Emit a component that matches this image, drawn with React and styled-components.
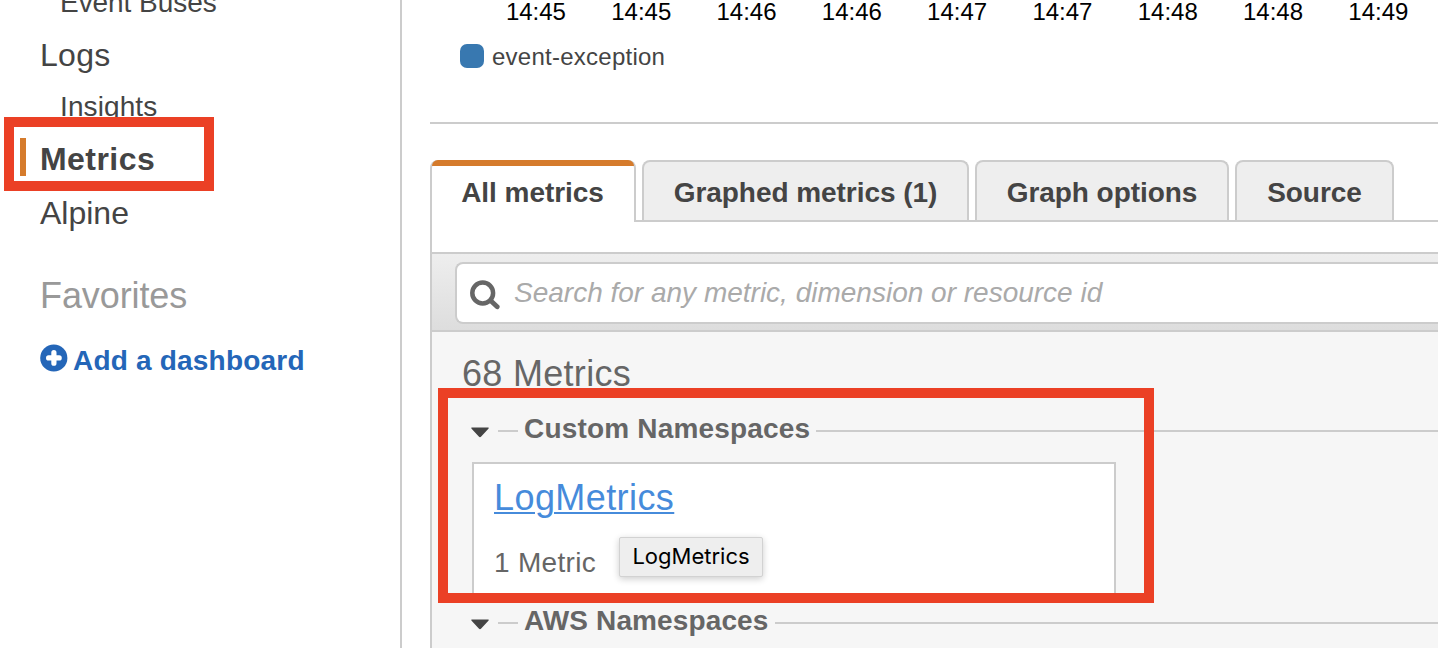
import React from "react";
import styled, { createGlobalStyle } from "styled-components";

const LINE = "#ccc";
const RED = "#eb4025";

const GlobalStyle = createGlobalStyle`
  body { margin: 0; background: #fff; }
  * { box-sizing: border-box; }
`;

const Page = styled.div`
  position: relative;
  display: flex;
  width: 1438px;
  height: 648px;
  overflow: hidden;
  background: #fff;
  color: #444;
  font-family: "Liberation Sans", Arial, Helvetica, sans-serif;
  white-space: nowrap;
`;

const Sidebar = styled.nav`
  flex: none;
  display: flex;
  flex-direction: column;
  width: 402px;
  border-right: 2px solid ${LINE};
`;

const NavItem = styled.a`
  padding-left: 40px;
  margin-top: ${(p) => p.$gap}px;
  font-size: 32px;
  line-height: 36px;
  letter-spacing: ${(p) => p.$track || 0}px;
`;

const SubItem = styled(NavItem)`
  padding-left: 60px;
  font-size: 28px;
  line-height: 38px;
`;

const CurrentItem = styled(NavItem)`
  margin-left: 20px;
  padding-left: 14px;
  height: 38px;
  border-left: 6px solid #d57b2c;
  font-weight: bold;
  line-height: 42px;
`;

const NavHeading = styled.h2`
  margin: 45px 0 0 40px;
  font-size: 36px;
  font-weight: normal;
  line-height: 40px;
  letter-spacing: -0.1px;
  color: #999;
`;

const AddLink = styled.a`
  display: flex;
  gap: 5px;
  margin: 26px 0 0 40px;
  font-size: 28px;
  font-weight: bold;
  line-height: 38px;
  letter-spacing: 0.2px;
  color: #2466b8;

  svg { margin-top: 2px; }
`;

const Main = styled.main`
  flex: 1;
  min-width: 0;
  display: flex;
  flex-direction: column;
  padding-left: 28px;
`;

const TimeAxis = styled.div`
  display: flex;
  padding-left: 53.3px;
`;

const Tick = styled.span`
  flex: none;
  width: 105.3px;
  text-align: center;
  font-size: 24px;
  line-height: 24px;
  color: #000;
`;

const Legend = styled.div`
  display: flex;
  gap: 8px;
  margin: 20px 0 0 30px;
  height: 24px;
  font-size: 24px;
  line-height: 26px;
  letter-spacing: 0.25px;
`;

const Swatch = styled.span`
  width: 24px;
  height: 24px;
  border-radius: 7px;
  background: #3878b0;
`;

const Rule = styled.div`
  flex: none;
  height: 2px;
  margin: 54px 0 36px;
  background: ${LINE};
`;

const Tabs = styled.div`
  flex: none;
  display: flex;
  gap: 6px;
  height: 62px;
  box-shadow: inset 0 -2px ${LINE};
`;

const Tab = styled.button`
  position: relative;
  flex: none;
  width: ${(p) => p.$width}px;
  height: 60px;
  padding: 2px 0 0;
  border: 2px solid ${LINE};
  border-bottom: 0;
  border-radius: 8px 8px 0 0;
  background: #eee;
  color: #444;
  font: bold 28px/58px "Liberation Sans", Arial, sans-serif;
  letter-spacing: -0.05px;
`;

const ActiveTab = styled(Tab)`
  height: 62px;
  padding: 1px 1px 0 0;
  line-height: 59px;
  background: #fff;

  &::before {
    content: "";
    position: absolute;
    top: -2px;
    left: 0;
    right: 0;
    height: 6px;
    border-radius: 6px 6px 0 0;
    background: #d57b2c;
  }
`;

const Panel = styled.section`
  flex: 1;
  display: flex;
  flex-direction: column;
  border-left: 2px solid ${LINE};
  padding-top: 30px;
`;

const SearchBar = styled.div`
  flex: none;
  height: 80px;
  padding: 8px 0 0 23px;
  border: solid ${LINE};
  border-width: 2px 0;
  background: linear-gradient(#eee, #ddd);
`;

const SearchField = styled.div`
  display: flex;
  gap: 12px;
  height: 62px;
  padding: 14px 0 0 13px;
  border: 2px solid ${LINE};
  border-right: 0;
  border-radius: 8px 0 0 8px;
  background: #fff;
`;

const Placeholder = styled.span`
  font-size: 28px;
  font-style: italic;
  line-height: 30px;
  color: #aaa;
`;

const Results = styled.div`
  flex: 1;
  padding-top: 22px;
  background: #f6f6f6;
  color: #666;
`;

const Count = styled.h2`
  margin: 0 0 16px 30px;
  font-size: 36px;
  font-weight: normal;
  line-height: 40px;
  letter-spacing: 0.3px;
`;

const GroupHeader = styled.div`
  display: flex;
  height: 36px;
  padding-left: 38px;
  margin-top: ${(p) => p.$gap}px;
`;

const Caret = styled.svg`
  margin: 17px 8px 0 0;
`;

const GroupTitle = styled.h3`
  margin: 0 6px;
  font-size: 28px;
  line-height: 38px;
  width: ${(p) => p.$width}px;
  letter-spacing: ${(p) => p.$track}px;
`;

const GroupLine = styled.span`
  width: ${(p) => (p.$short ? "20px" : "auto")};
  flex: ${(p) => (p.$short ? "none" : 1)};
  height: 2px;
  margin-top: 20px;
  background: ${LINE};
`;

const Card = styled.article`
  width: 644px;
  height: 136px;
  margin: 16px 0 0 40px;
  padding: 14px 0 0 20px;
  border: 2px solid ${LINE};
  background: #fff;
`;

const CardLink = styled.a`
  display: block;
  font-size: 36px;
  line-height: 40px;
  letter-spacing: 0.42px;
  color: #468bdb;
  text-decoration: underline 2px;
  text-underline-offset: 2px;
`;

const CardCount = styled.p`
  margin: 27px 0 0;
  font-size: 28px;
  line-height: 36px;
  letter-spacing: 0.3px;
`;

const Tooltip = styled.div`
  position: absolute;
  left: 619px;
  top: 537px;
  width: 144px;
  height: 40px;
  border: 1px solid #d2d2d2;
  border-radius: 2px;
  background: #eee;
  box-shadow: 0 2px 7px rgba(0, 0, 0, 0.2);
  color: #000;
  font: 22px/37px Inter, sans-serif;
  text-align: center;
`;

const Highlight = styled.div`
  position: absolute;
  left: ${(p) => p.$x}px;
  top: ${(p) => p.$y}px;
  width: ${(p) => p.$w}px;
  height: ${(p) => p.$h}px;
  border: 10px solid ${RED};
`;

const ticks = ["14:45", "14:45", "14:46", "14:46", "14:47", "14:47", "14:48", "14:48", "14:49"];

const PlusIcon = () => (
  <svg width="28" height="28" viewBox="0 0 28 28">
    <circle cx="13.8" cy="14" r="13.6" fill="#2466b8" />
    <path d="M13.9 8.6v10.6M8.6 13.9h10.6" stroke="#fff" strokeWidth="5.2" strokeLinecap="round" />
  </svg>
);

const SearchIcon = () => (
  <svg width="32" height="32" viewBox="0 0 32 32">
    <circle cx="12.7" cy="15" r="10.4" fill="none" stroke="#666" strokeWidth="4.5" />
    <path d="M20.5 22.5l6.7 6.3" stroke="#666" strokeWidth="4.8" strokeLinecap="round" />
  </svg>
);

const Group = ({ title, gap, width, track }) => (
  <GroupHeader $gap={gap}>
    <Caret width="20" height="12" viewBox="0 0 20 12">
      <path d="M1.6.5h16.8q.9.3 0 1.2l-7.2 7.9q-1.2 1.2-2.4 0L1.6 1.7Q.8.8 1.6.5z" fill="#444" />
    </Caret>
    <GroupLine $short />
    <GroupTitle $width={width} $track={track}>{title}</GroupTitle>
    <GroupLine />
  </GroupHeader>
);

export default function App() {
  return (
    <Page>
      <GlobalStyle />
      <Sidebar>
        <SubItem $gap={-16} $track={-0.05}>Event Buses</SubItem>
        <NavItem $gap={15} $track={0.3}>Logs</NavItem>
        <SubItem $gap={15} $track={0.1}>Insights</SubItem>
        <CurrentItem $gap={12} $track={0.45}>Metrics</CurrentItem>
        <NavItem $gap={19}>Alpine</NavItem>
        <NavHeading>Favorites</NavHeading>
        <AddLink>
          <PlusIcon />
          <span>Add a dashboard</span>
        </AddLink>
      </Sidebar>
      <Main>
        <TimeAxis>
          {ticks.map((t, i) => <Tick key={i}>{t}</Tick>)}
        </TimeAxis>
        <Legend>
          <Swatch />
          <span>event-exception</span>
        </Legend>
        <Rule />
        <Tabs>
          <ActiveTab $width={206}>All metrics</ActiveTab>
          <Tab $width={327}>Graphed metrics (1)</Tab>
          <Tab $width={254}>Graph options</Tab>
          <Tab $width={159}>Source</Tab>
        </Tabs>
        <Panel>
          <SearchBar>
            <SearchField>
              <SearchIcon />
              <Placeholder>Search for any metric, dimension or resource id</Placeholder>
            </SearchField>
          </SearchBar>
          <Results>
            <Count>68 Metrics</Count>
            <Group title="Custom Namespaces" gap={0} width={286} track={0.18} />
            <Card>
              <CardLink>LogMetrics</CardLink>
              <CardCount>1 Metric</CardCount>
            </Card>
            <Group title="AWS Namespaces" gap={4} width={245} track={0.12} />
          </Results>
        </Panel>
      </Main>
      <Tooltip>LogMetrics</Tooltip>
      <Highlight $x={4} $y={117} $w={210} $h={74} />
      <Highlight $x={438} $y={388} $w={716} $h={215} />
    </Page>
  );
}
